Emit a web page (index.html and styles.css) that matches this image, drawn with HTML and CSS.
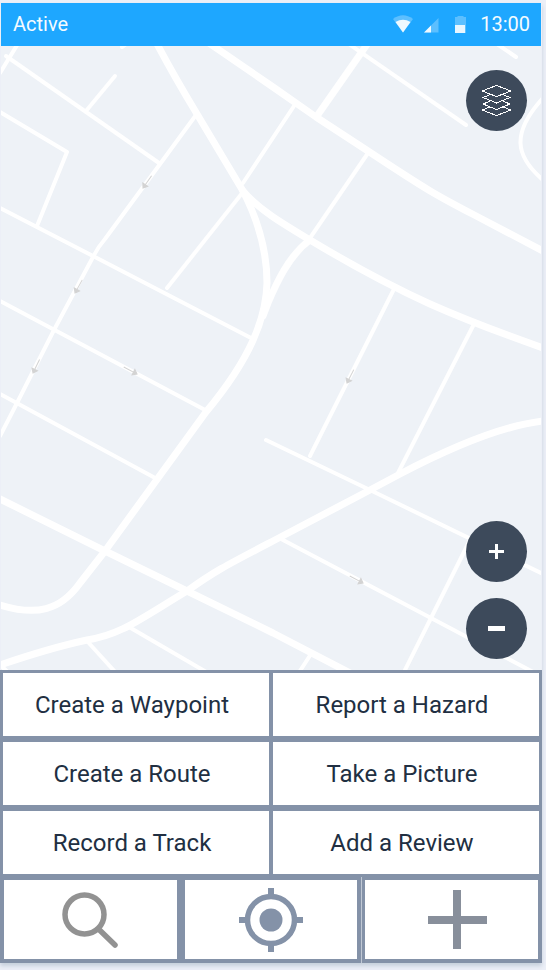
FILE: index.html
```html
<!DOCTYPE html>
<html lang="en">
<head>
<meta charset="utf-8">
<meta name="viewport" content="width=device-width, initial-scale=1">
<title>Active</title>
<link rel="stylesheet" href="styles.css">
</head>
<body>
<div class="app">
  <header class="status-bar">
    <span class="status-title">Active</span>
    <div class="status-icons">
      <svg class="icon-wifi" width="20" height="18" viewBox="0 0 20 18" aria-hidden="true">
        <path d="M0 4 Q10 -3.500 20 4 L10 17.500 Z" fill="#fff" opacity=".28"/>
        <path d="M2.500 7 Q10 2.500 17.500 7 L10 17.500 Z" fill="#fff" opacity=".9"/>
      </svg>
      <svg class="icon-signal" width="15" height="18" viewBox="0 0 15 18" aria-hidden="true">
        <path d="M0 17.500 L14.500 3 V17.500 Z" fill="#fff" opacity=".28"/>
        <path d="M0 17.500 L7 10.500 V17.500 Z" fill="#fff" opacity=".9"/>
      </svg>
      <svg class="icon-battery" width="11" height="18" viewBox="0 0 11 18" aria-hidden="true">
        <path d="M0 10 V2 H2 L3 1 H8 L9 2 H11 V18 H10 V10 Z" fill="#fff" opacity=".28"/>
        <path d="M0 10 H10 V18 H0 Z" fill="#fff" opacity=".9"/>
      </svg>
      <time>13:00</time>
    </div>
  </header>

  <main class="map">
    <svg class="map-canvas" viewBox="1 46 540 624" preserveAspectRatio="xMidYMid slice" aria-hidden="true">
      <g class="street">
        <path d="M19 42 L0 73"/>
        <path d="M6 56 L159 163"/>
        <path d="M115 76 L86 111"/>
        <path d="M0 112 L67 152 L37 226"/>
        <path d="M0 208 L93 256 L253 339"/>
        <path d="M196 115 L105 239 Q98 247 93 257 L54 330 L17 403 L0 436"/>
        <path d="M122 47 L129 42"/>
        <path d="M0 301 L207 411"/>
        <path d="M0 394 L157 479"/>
        <path d="M167 288 L243 192"/>
        <path d="M243 183 L294 106"/>
        <path d="M368 153 L310 238"/>
        <path d="M346 42 L466 125"/>
        <path d="M494 42 L516 57"/>
        <path d="M543 98 Q520 123 520.500 143 Q521 161 543 180"/>
        <path d="M394 289 L310 456"/>
        <path d="M474 324 L398 473"/>
        <path d="M266 440 L370 490 L543 574"/>
        <path d="M283 540 L431 618 L535 673"/>
        <path d="M470 540 L431 618 L403 674"/>
        <path d="M129 627 L208 673"/>
        <path d="M87 641 L117 674"/>
        <path d="M0 665 L10 674"/>
        <path d="M311 654 L298 674"/>
      </g>
      <g class="avenue">
        <path d="M156 42 Q174 76 197 114 L243 191 C259 222 267 252 267 283 C266 318 251 358 206 412 L105 551 L80 583 C60 611 36 616 0 605"/>
        <path d="M206 41 L273 87 L316 117 L368 151 C433 194 438 196 480 218 L543 251"/>
        <path d="M243 191 C259 210 285 225 310 240 C350 264 397 289 430 304 Q475 324 543 348"/>
        <path d="M310 240 C289 255 276 284 268 303 L263 316"/>
        <path d="M0 499 L105 551 L187 591 L273 633 L352 674"/>
        <path d="M0 665 Q50 648 87 640 C120 635 137 621 187 591 C215 571 225 566 273 541 L370 490 L400 474 Q490 427 543 421"/>
        <path d="M368 43 L317 116"/>
      </g>
      <g class="one-way">
        <g transform="translate(143 188) rotate(125)"><path d="M-15 0 H-3"/><path d="M0 0 L-4 -3 V3 Z"/></g>
        <g transform="translate(75 293) rotate(119)"><path d="M-15 0 H-3"/><path d="M0 0 L-4 -3 V3 Z"/></g>
        <g transform="translate(33 373) rotate(116)"><path d="M-15 0 H-3"/><path d="M0 0 L-4 -3 V3 Z"/></g>
        <g transform="translate(137 374) rotate(28)"><path d="M-15 0 H-3"/><path d="M0 0 L-4 -3 V3 Z"/></g>
        <g transform="translate(347 383) rotate(117)"><path d="M-15 0 H-3"/><path d="M0 0 L-4 -3 V3 Z"/></g>
        <g transform="translate(363 583) rotate(28)"><path d="M-15 0 H-3"/><path d="M0 0 L-4 -3 V3 Z"/></g>
      </g>
    </svg>
    <button class="round-button layers-button" type="button" aria-label="Layers">
      <svg width="31" height="31" viewBox="0 0 31 31" fill="#3d4a5b" stroke="#fff" stroke-width="1" shape-rendering="crispEdges">
        <path d="M1 25 L15.500 19.500 L30 25 L15.500 30.500 Z"/>
        <path d="M2 19 L15.500 13.500 L29 19 L15.500 24.500 Z"/>
        <path d="M2 12.500 L15.500 7 L29 12.500 L15.500 18 Z"/>
        <path d="M1 6 L15.500 .500 L30 6 L15.500 11.500 Z"/>
      </svg>
    </button>
    <div class="zoom-controls">
      <button class="round-button" type="button" aria-label="Zoom in">
        <svg width="15" height="15" viewBox="0 0 15 15" fill="#fff"><path d="M6 0 H9 V6 H15 V9 H9 V15 H6 V9 H0 V6 H6 Z"/></svg>
      </button>
      <button class="round-button" type="button" aria-label="Zoom out">
        <svg width="17" height="5" viewBox="0 0 17 5" fill="#fff"><path d="M0 0 H17 V5 H0 Z"/></svg>
      </button>
    </div>
  </main>

  <section class="actions">
    <button type="button">Create a Waypoint</button>
    <button type="button">Report a Hazard</button>
    <button type="button">Create a Route</button>
    <button type="button">Take a Picture</button>
    <button type="button">Record a Track</button>
    <button type="button">Add a Review</button>
  </section>

  <nav class="tab-bar">
    <button type="button" aria-label="Search">
      <svg width="56" height="56" viewBox="0 0 56 56" fill="none" stroke="#929292">
        <circle cx="22.500" cy="22.500" r="19.500" stroke-width="5.500"/>
        <path d="M36.500 37 L53 53" stroke-width="5.500" stroke-linecap="round"/>
      </svg>
    </button>
    <button type="button" aria-label="My location">
      <svg width="64" height="64" viewBox="0 0 64 64" fill="none" stroke="#8492a8">
        <circle cx="32" cy="32" r="23.500" stroke-width="5.500"/>
        <circle cx="32" cy="32" r="11.500" fill="#8492a8" stroke="none"/>
        <path d="M32 0 V7 M32 57 V64 M0 32 H7 M57 32 H64" stroke-width="6"/>
      </svg>
    </button>
    <button class="add-tab" type="button" aria-label="Add">
      <svg width="59" height="59" viewBox="0 0 59 59" fill="#888f9b"><path d="M25 0 H33 V26 H59 V34 H33 V59 H25 V34 H0 V26 H25 Z"/></svg>
    </button>
  </nav>
</div>
</body>
</html>
```
FILE: styles.css
```css
* {
  box-sizing: border-box;
}

body {
  margin: 0;
  padding: 3px 4px 7px 0;
  background: #eceff7;
  font-family: Roboto, "Liberation Sans", sans-serif;
}

button {
  display: flex;
  align-items: center;
  justify-content: center;
  margin: 0;
  padding: 0;
  border: 0;
  font: inherit;
  cursor: pointer;
}

svg {
  display: block;
}

.app {
  display: flex;
  flex-direction: column;
  min-height: calc(100vh - 10px);
  box-shadow: 0 3px 4px #c6d0dc;
}

.status-bar {
  display: flex;
  align-items: center;
  justify-content: space-between;
  height: 43px;
  margin: 0 1px;
  padding: 0 11px 2px 12px;
  background: #1ea7ff;
  color: #f4fbff;
  font-size: 20px;
  line-height: 24px;
}

.status-icons {
  display: flex;
  align-items: center;
}

.icon-signal {
  margin-left: 11px;
}

.icon-battery {
  margin: 0 14px 0 16px;
}

.map {
  position: relative;
  flex: 1;
  min-height: 400px;
  margin: 0 1px;
  background: #eef2f7;
  overflow: hidden;
}

.map-canvas {
  position: absolute;
  inset: 0;
  width: 100%;
  height: 100%;
}

.street,
.avenue {
  fill: none;
  stroke: #fff;
  stroke-linecap: round;
  stroke-linejoin: round;
}

.street {
  stroke-width: 4px;
}

.avenue {
  stroke-width: 7px;
}

.one-way {
  fill: #d3d3d3;
  stroke: #d3d3d3;
  stroke-width: 1px;
}

.round-button {
  width: 61px;
  height: 61px;
  border-radius: 50%;
  background: #3d4a5b;
}

.layers-button {
  position: absolute;
  top: 24px;
  right: 14px;
}

.zoom-controls {
  position: absolute;
  right: 14px;
  bottom: 11px;
  display: flex;
  flex-direction: column;
  gap: 16px;
}

.actions {
  display: grid;
  grid-template-columns: 1fr 1fr;
  gap: 6px 4px;
  padding: 3px;
  background: #8492a8;
}

.actions button {
  height: 63px;
  padding-right: 8px;
  background: #fff;
  color: #212f42;
  font-size: 24px;
  line-height: 28px;
}

.tab-bar {
  display: grid;
  grid-template-columns: repeat(3, 1fr);
  gap: 8px;
  padding: 3px 4px 4px;
  background: #8492a8;
}

.tab-bar button {
  height: 79px;
  background: #fff;
}

.tab-bar .add-tab {
  position: relative;
  padding-left: 12px;
}

.add-tab::before {
  content: "";
  position: absolute;
  top: -3px;
  bottom: -4px;
  left: -4px;
  width: 1px;
  background: #c0c8d4;
}
```
